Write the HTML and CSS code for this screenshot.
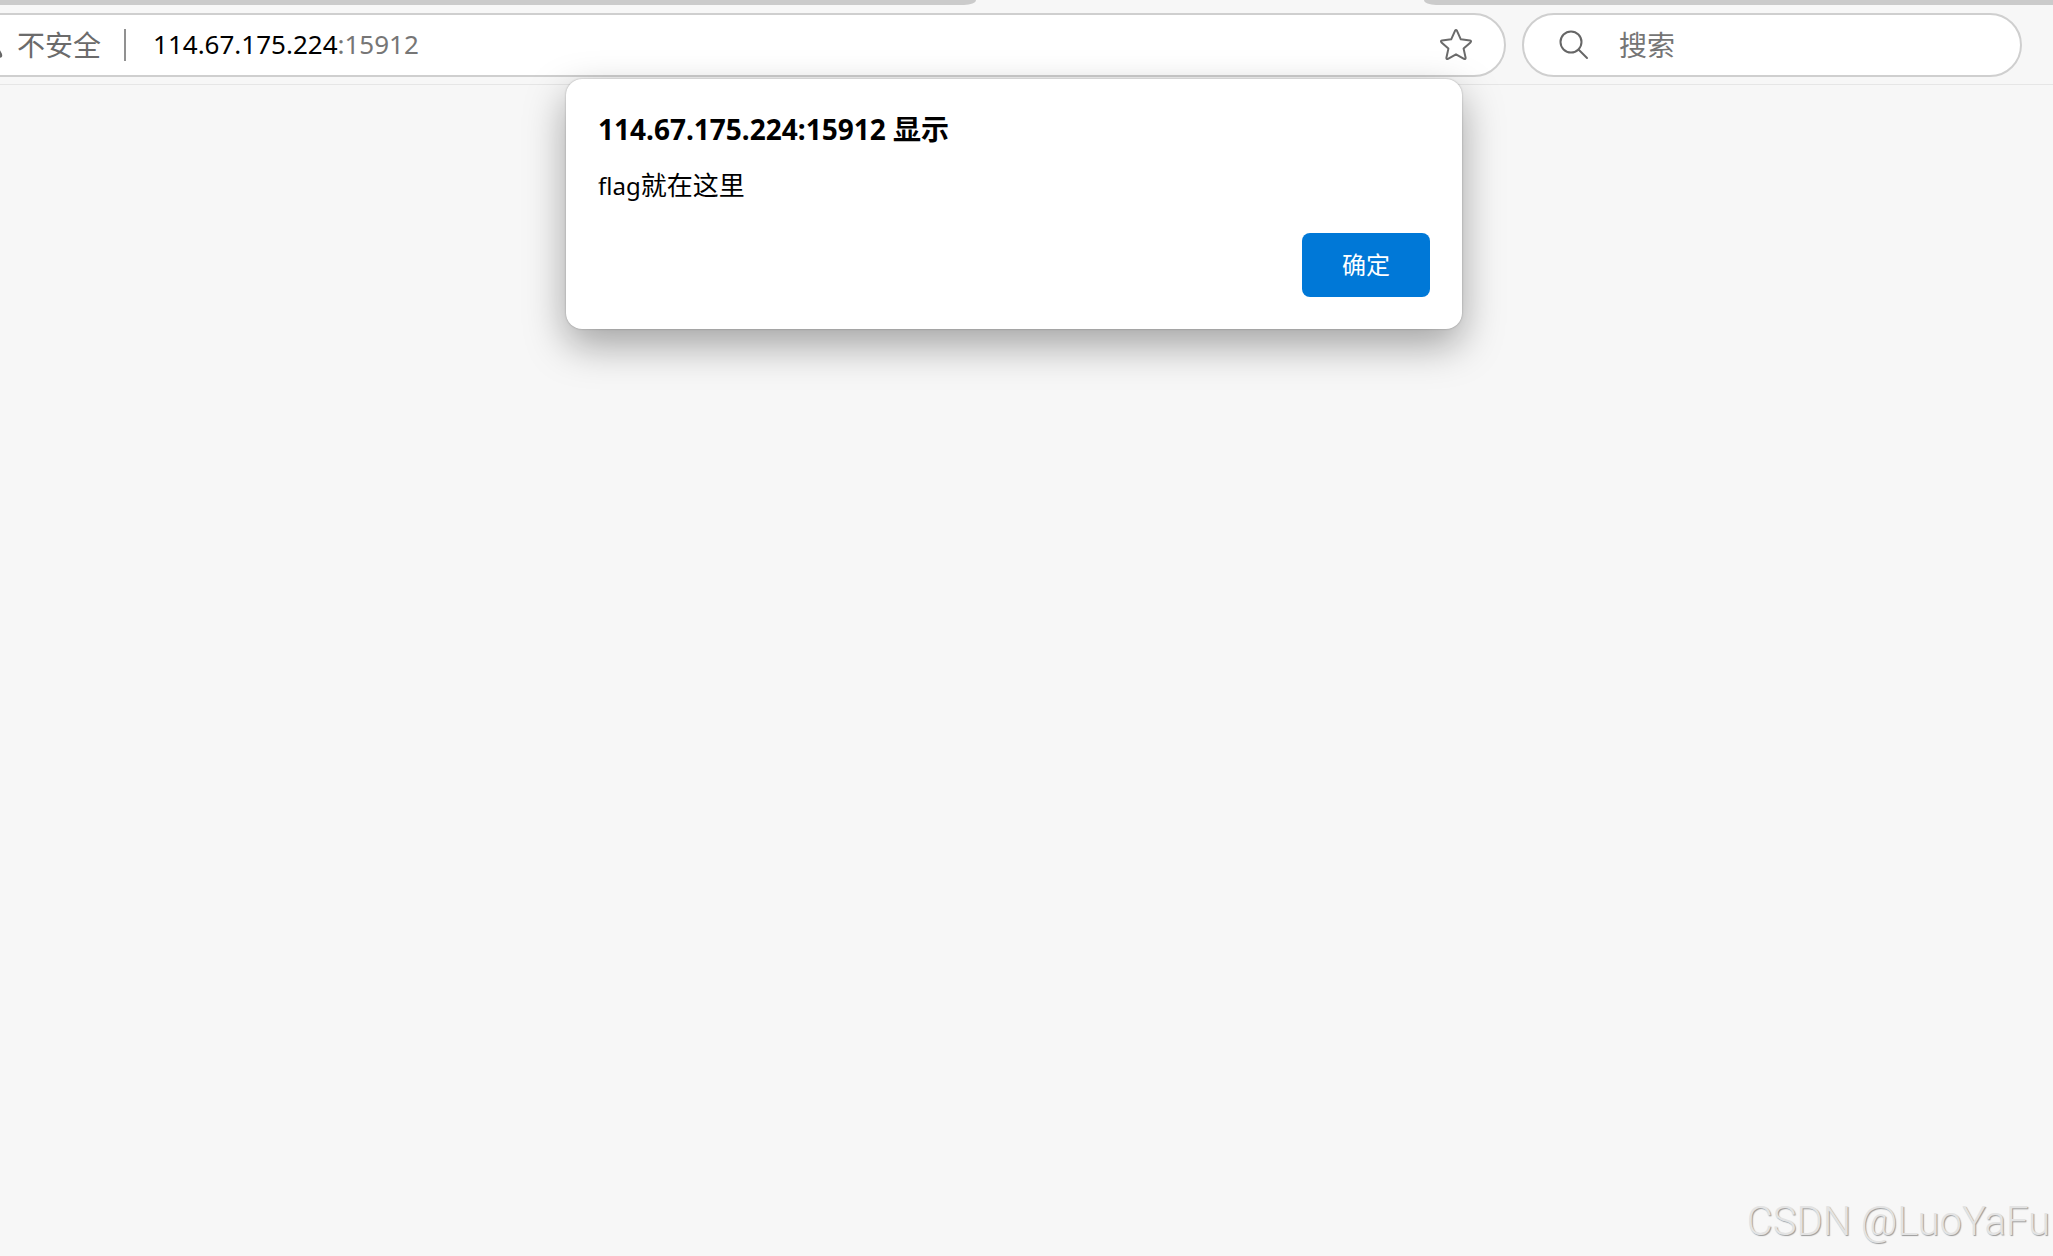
FILE: index.html
```
<!DOCTYPE html>
<html lang="zh-CN">
<head>
    <meta charset="UTF-8">
    <meta name="viewport" content="width=device-width, initial-scale=1.0">
    <title>114.67.175.224:15912</title>
    <link rel="stylesheet" href="styles.css">
</head>
<body>
    <div class="tabs">
        <div class="tab tab-left"></div>
        <div class="tab tab-right"></div>
    </div>
    <header class="toolbar">
        <div class="address-bar">
            <svg class="warning" viewBox="0 0 28 28" fill="none" stroke="#666" stroke-width="2" stroke-linejoin="round" stroke-linecap="round">
                <path d="M12.3 3.5 L2 22.5 Q1 25 3.5 25 H24.5 Q27 25 26 22.5 L15.7 3.5 Q14 1 12.3 3.5 Z"/>
                <path d="M14 10 V17 M14 21 V21.2"/>
            </svg>
            <span class="security">不安全</span>
            <span class="divider"></span>
            <span class="url">114.67.175.224<span class="port">:15912</span></span>
            <button class="favorite" type="button" aria-label="收藏">
                <svg viewBox="0 0 34 34" fill="none" stroke="#6b6b6b" stroke-width="2" stroke-linejoin="round">
                    <path d="M16 2.8 Q17 1.2 18 2.8 L21.8 11.3 L31 12.4 Q32.8 13 31.5 14.4 L24.6 20.6 L26.6 29.8 Q26.7 31.5 25 30.9 L17 26.3 L9 30.9 Q7.3 31.5 7.4 29.8 L9.4 20.6 L2.5 14.4 Q1.2 13 3 12.4 L12.2 11.3 Z"/>
                </svg>
            </button>
        </div>
        <form class="search-bar">
            <svg viewBox="0 0 30 30" fill="none" stroke="#666" stroke-width="2" stroke-linecap="round">
                <circle cx="12" cy="12" r="10.5"/>
                <path d="M19.5 19.5 L28 28"/>
            </svg>
            <input type="text" placeholder="搜索" aria-label="搜索">
        </form>
    </header>
    <main class="page">
        <p class="watermark">CSDN @LuoYaFu</p>
    </main>
    <div class="overlay">
        <div class="dialog" role="alertdialog" aria-labelledby="dialog-title" aria-describedby="dialog-text">
            <h1 id="dialog-title">114.67.175.224:15912 显示</h1>
            <p id="dialog-text"><span class="latin">flag</span>就在这里</p>
            <button class="confirm" type="button">确定</button>
        </div>
    </div>
</body>
</html>
```
FILE: styles.css
```
* {
    box-sizing: border-box;
}
body {
    margin: 0;
    min-height: 100vh;
    display: flex;
    flex-direction: column;
    overflow: hidden;
    background-color: #f7f7f7;
    font-family: 'Noto Sans', 'Noto Sans CJK SC', sans-serif;
    color: #000;
}
button,
input {
    font-family: inherit;
    border: none;
    padding: 0;
}
.tabs {
    display: flex;
    justify-content: space-between;
    gap: 448px;
    height: 5px;
}
.tab {
    background-color: #cbcbcb;
}
.tab-left {
    flex: 976;
    border-bottom-right-radius: 12px 5px;
}
.tab-right {
    flex: 629;
    border-bottom-left-radius: 12px 5px;
}
.toolbar {
    display: flex;
    gap: 16px;
    height: 80px;
    padding: 8px 31px 7px 0;
    border-bottom: 1px solid #e6e6e6;
}
.address-bar,
.search-bar {
    display: flex;
    align-items: center;
    height: 64px;
    background-color: #fff;
    border: 2px solid #cfcfcf;
    border-radius: 32px;
}
.address-bar {
    flex: 1;
    margin-left: -60px;
    padding: 0 31px;
}
.warning {
    width: 30px;
    height: 30px;
    margin-right: 14px;
}
.security {
    padding-bottom: 2px;
    font-family: 'Noto Sans CJK SC', sans-serif;
    font-size: 28px;
    line-height: 40px;
    color: #6b6b6b;
}
.divider {
    width: 2px;
    height: 32px;
    margin: 0 27px 0 23px;
    background-color: #919191;
}
.url {
    padding-bottom: 2px;
    font-size: 26px;
    line-height: 40px;
}
.port {
    color: #767676;
}
.favorite {
    width: 34px;
    height: 34px;
    margin-left: auto;
    background: none;
    cursor: pointer;
}
.favorite svg {
    display: block;
}
.search-bar {
    width: 500px;
    padding: 0 35px;
    gap: 30px;
}
.search-bar svg {
    width: 30px;
    height: 30px;
}
.search-bar input {
    flex: 1;
    min-width: 0;
    height: 48px;
    font-size: 28px;
    background: none;
    outline: none;
}
.search-bar input::placeholder {
    color: #757575;
}
.page {
    flex: 1;
    display: flex;
    justify-content: flex-end;
    align-items: flex-end;
}
.watermark {
    margin: 0;
    padding: 0 3px 10px 0;
    font-family: Roboto, sans-serif;
    font-size: 40px;
    font-weight: 300;
    line-height: 48px;
    color: #e3e3e3;
    text-shadow: 1px 1px 1px #9a9a9a;
}
/* the alert hangs over the toolbar and the page */
.overlay {
    position: absolute;
    top: 79px;
    left: 0;
    right: 25px;
    display: flex;
    justify-content: center;
}
.dialog {
    display: flex;
    flex-direction: column;
    width: 896px;
    padding: 32px;
    background-color: #fff;
    border-radius: 16px;
    box-shadow: 0 0 2px rgba(0, 0, 0, 0.3), 0 16px 40px rgba(0, 0, 0, 0.35);
}
.dialog h1 {
    margin: 0;
    font-size: 28px;
    font-weight: 700;
    line-height: 36px;
}
.dialog p {
    margin: 20px 0 29px;
    font-size: 26px;
    line-height: 36px;
}
.dialog .latin {
    font-size: 24px;
}
.confirm {
    align-self: flex-end;
    width: 128px;
    height: 64px;
    padding-bottom: 4px;
    font-size: 24px;
    color: #fff;
    background-color: #0078d7;
    border-radius: 8px;
    cursor: pointer;
}
```
